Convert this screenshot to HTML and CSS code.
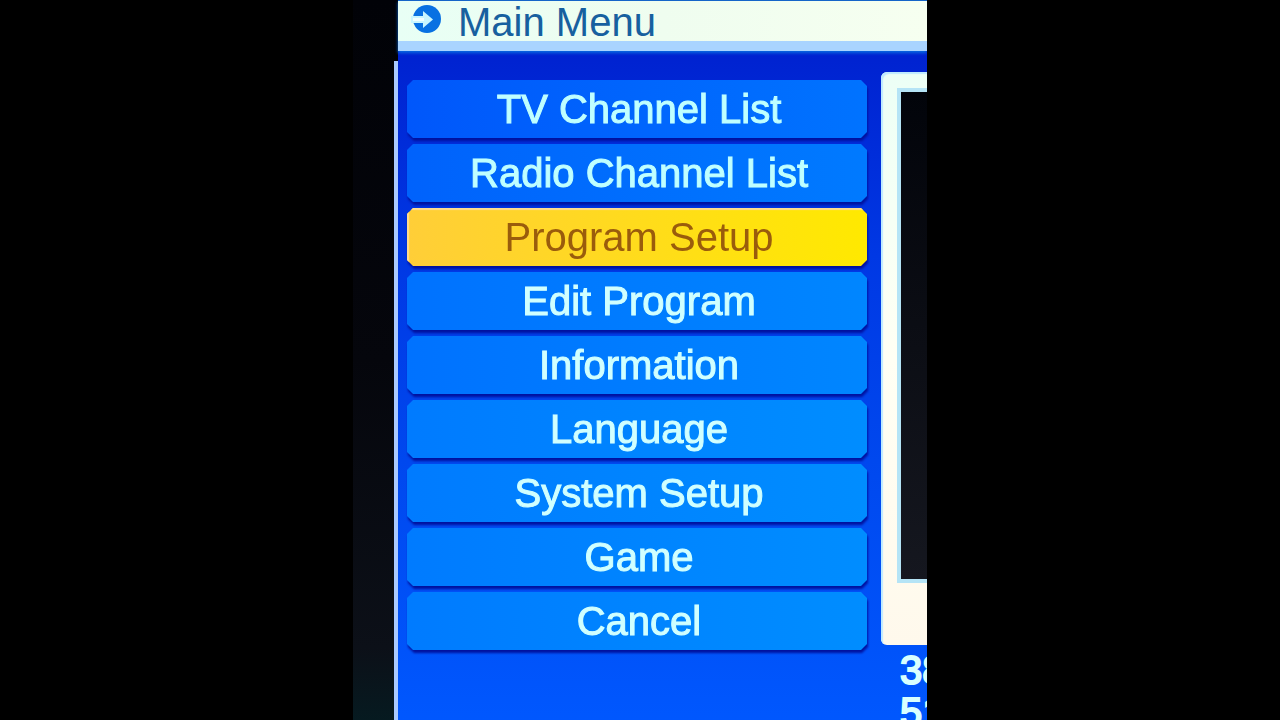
FILE: index.html
```
<!DOCTYPE html>
<html lang="en">
<head>
<meta charset="utf-8">
<meta name="viewport" content="width=device-width, initial-scale=1">
<title>Main Menu</title>
<link rel="stylesheet" href="styles.css">
</head>
<body>
<div class="view">
  <main class="screen">
    <header class="title-bar">
      <svg class="title-icon" viewBox="0 0 32 32" aria-hidden="true">
        <circle class="icon-disc" cx="17" cy="16" r="14"/>
        <path class="icon-arrow" d="M1 13H13V8L23 16.500L13 25V20H1Z"/>
        <path class="icon-line" d="M3 16.500H14"/>
      </svg>
      <h1 class="title">Main Menu</h1>
    </header>
    <div class="content">
      <nav class="menu-area" aria-label="Main Menu">
        <ul class="menu">
          <li class="menu-item tone-1"><button class="menu-button" type="button">TV Channel List</button></li>
          <li class="menu-item tone-2"><button class="menu-button" type="button">Radio Channel List</button></li>
          <li class="menu-item selected"><button class="menu-button" type="button" aria-current="true">Program Setup</button></li>
          <li class="menu-item tone-3"><button class="menu-button" type="button">Edit Program</button></li>
          <li class="menu-item tone-3"><button class="menu-button" type="button">Information</button></li>
          <li class="menu-item tone-4"><button class="menu-button" type="button">Language</button></li>
          <li class="menu-item tone-4"><button class="menu-button" type="button">System Setup</button></li>
          <li class="menu-item tone-4"><button class="menu-button" type="button">Game</button></li>
          <li class="menu-item tone-4"><button class="menu-button" type="button">Cancel</button></li>
        </ul>
      </nav>
      <aside class="side">
        <div class="preview"><div class="preview-picture"></div></div>
        <p class="reading">38</p>
        <p class="reading">51</p>
      </aside>
    </div>
  </main>
</div>
</body>
</html>
```
FILE: styles.css
```
* { box-sizing: border-box; }

body {
  margin: 0;
  background: #000;
  font-family: "Liberation Sans", Arial, sans-serif;
  font-size: 40px;
  line-height: 42px;
}

.view {
  display: flex;
  height: 100vh;
  max-width: 574px;
  margin: 0 auto;
  padding-left: 40px;
  overflow: hidden;
  background: linear-gradient(#010207, #05060c 50%, #0c1018 90%, #061a20);
}

.screen {
  flex: 1;
  min-width: 0;
  display: flex;
  flex-direction: column;
}

.title-bar {
  display: flex;
  align-items: flex-start;
  gap: 16px;
  margin-left: 5px;
  padding: 2px 12px 0;
  border-top: 1px solid #1565c8;
  border-bottom: 10px solid #a9d4ff;
  background: linear-gradient(90deg, #e8fff5, #effdef 50%, #f6fff0);
  position: relative;
  box-shadow: 0 2px 3px #086be0;
  z-index: 1;
}

.title-icon { width: 32px; height: 32px; flex: none; }
.icon-disc { fill: #0871e2; }
.icon-arrow { fill: #c8f6ff; }
.icon-line { stroke: #f0ffff; stroke-width: 3; }

.title {
  margin: 0;
  font-size: 40px;
  line-height: 38px;
  font-weight: 400;
  color: #17609f;
}

.content {
  flex: 1;
  display: flex;
  gap: 14px;
  margin-left: 5px;
  padding-left: 9px;
  background: linear-gradient(#0022d0, #0038e4 30%, #0048ee 60%, #0058ff);
  position: relative;
}

/* bright edge of the panel, starting below the title bar */
.content::before {
  content: "";
  position: absolute;
  left: -4px;
  top: 10px;
  bottom: 0;
  width: 4px;
  background: #a9c9ff;
}

.menu-area {
  flex: 1;
  padding-top: 29px;
}

.menu {
  display: grid;
  gap: 6px;
  margin: 0;
  padding: 0;
  list-style: none;
}

.menu-item {
  height: 58px;
  filter: drop-shadow(1px 3px 1px #0012a0);
}

.menu-button {
  display: block;
  width: 100%;
  height: 100%;
  padding: 0 0 0 4px;
  border: 0;
  font: inherit;
  color: #bfffff;
  -webkit-text-stroke: 1px #bfffff;
  background: linear-gradient(90deg, var(--from), var(--to));
  clip-path: polygon(6px 0, calc(100% - 6px) 0, 100% 6px, 100% calc(100% - 6px), calc(100% - 6px) 100%, 6px 100%, 0 calc(100% - 6px), 0 6px);
}

.tone-1 { --from: #0057fb; --to: #0073ff; }
.tone-2 { --from: #0062fc; --to: #007aff; }
.tone-3 { --from: #0072ff; --to: #0086ff; }
.tone-4 { --from: #007bff; --to: #008dff; }

.tone-3 .menu-button,
.tone-4 .menu-button {
  color: #d0ffff;
  -webkit-text-stroke-color: #d0ffff;
}

.selected { --from: #ffce38; --to: #ffe900; }
.selected .menu-button {
  color: #9a5c0c;
  -webkit-text-stroke: 0;
  box-shadow: inset 2px 2px 1px #ffdc90;
}

.side {
  flex: none;
  width: 46px;
  padding-top: 21px;
  overflow: hidden;
}

.preview {
  height: 573px;
  margin-bottom: 4px;
  padding: 16px 0 62px 16px;
  border-radius: 6px 0 0 6px;
  background: linear-gradient(#ecfff6, #fffff4 50%, #fff9ec);
  box-shadow: inset 2px 2px 1px #bfeaff;
}

.preview-picture {
  height: 100%;
  border: 4px solid #b5e4f6;
  border-right: 0;
  background: linear-gradient(#02040a, #15171f);
}

.reading {
  margin: 0;
  padding-left: 19px;
  white-space: nowrap;
  color: #d8ffff;
  -webkit-text-stroke: 2px #d8ffff;
}
```
